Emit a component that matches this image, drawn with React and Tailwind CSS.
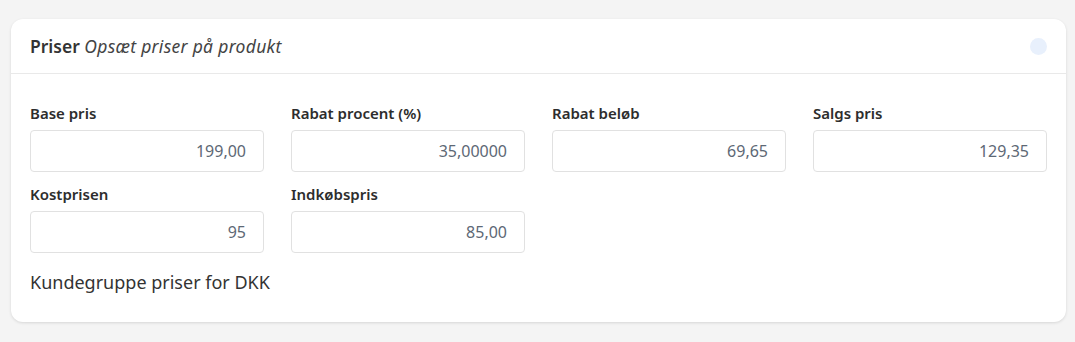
const fields = [
  { label: "Base pris", value: "199,00" },
  { label: "Rabat procent (%)", value: "35,00000" },
  { label: "Rabat beløb", value: "69,65" },
  { label: "Salgs pris", value: "129,35" },
  { label: "Kostprisen", value: "95" },
  { label: "Indkøbspris", value: "85,00" },
]

function Field({ label, value }) {
  return (
    <label className="flex flex-col">
      <span className="mb-[7px] text-[15px] font-semibold leading-[20px] text-[#2d2d2d]">{label}</span>
      <input
        defaultValue={value}
        className="h-[42px] w-full rounded-[4px] border border-[#e1e1e1] bg-white px-[17px] text-right text-[16px] text-[#5d6875] outline-none"
      />
    </label>
  )
}

export default function App() {
  return (
    <div className="min-h-screen bg-[#f4f4f4] pl-[11px] pr-[9px] pt-[19px] font-['Noto_Sans','Lato',sans-serif]">
      <div className="rounded-[12px] bg-white shadow-[0_1px_3px_rgba(0,0,0,0.12)]">
        <div className="flex h-[55px] items-center justify-between border-b border-[#e9e9e9] px-[19px]">
          <h3 className="text-[17.5px] text-[#333]">
            <span className="font-semibold">Priser</span>{" "}
            <em className="tracking-[0.3px] text-[#444]">Opsæt priser på produkt</em>
          </h3>
          <span className="h-[17px] w-[17px] rounded-full bg-[#e8f0fc]" />
        </div>
        <div className="px-[19px] pb-[28px] pt-[29px]">
          <div className="grid grid-cols-4 gap-x-[27px] gap-y-[12px]">
            {fields.map((f) => (
              <Field key={f.label} {...f} />
            ))}
          </div>
          <p className="mt-[17px] text-[18px] leading-[24px] text-[#333]">Kundegruppe priser for DKK</p>
        </div>
      </div>
    </div>
  )
}
